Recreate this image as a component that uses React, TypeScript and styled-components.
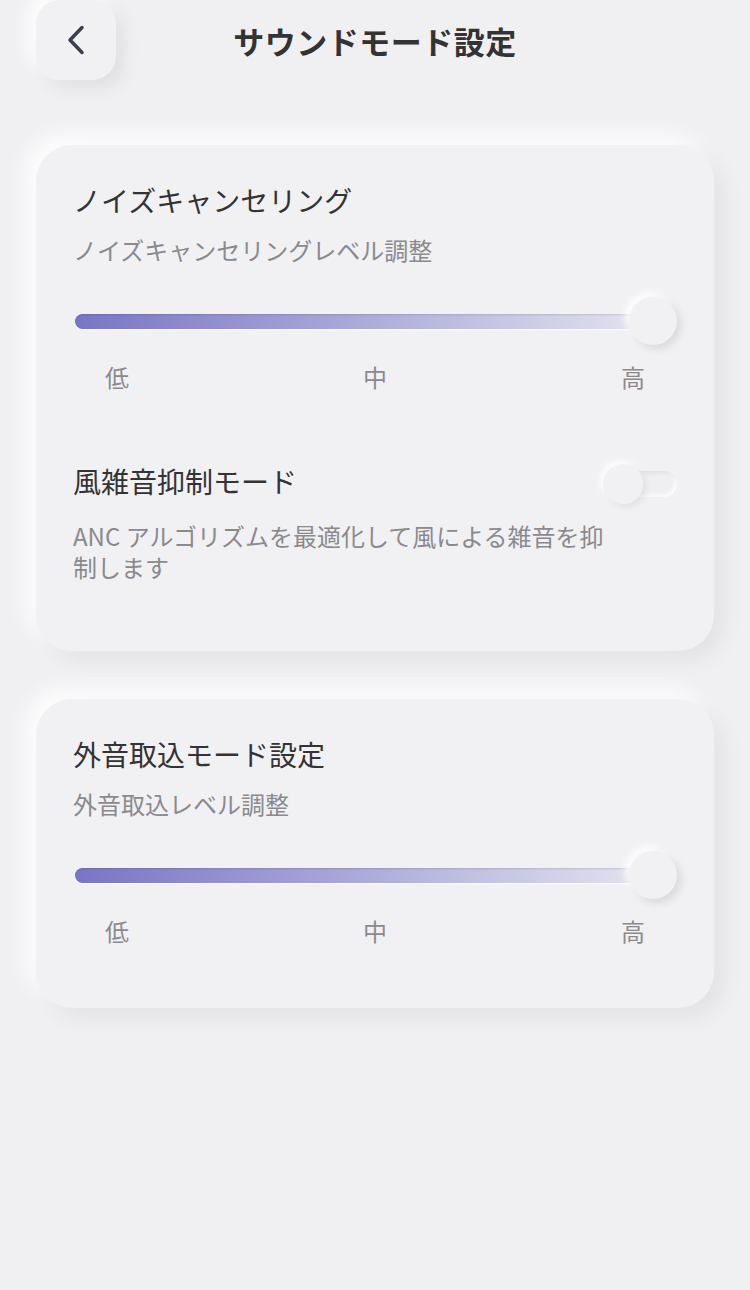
import React from 'react';
import styled, { createGlobalStyle } from 'styled-components';

const GlobalStyle = createGlobalStyle`
  html, body {
    margin: 0;
    padding: 0;
    background: #f0f0f3;
  }
  body {
    font-family: "Noto Sans CJK JP", "Noto Sans", sans-serif;
    color: #333;
  }
  * {
    box-sizing: border-box;
  }
`;

const Page = styled.div`
  min-height: 1290px;
  padding: 0 36px 40px;
  background: #f0f0f3;
`;

const Header = styled.header`
  display: grid;
  grid-template-columns: 80px 1fr 80px;
  align-items: center;
  height: 80px;
`;

const BackButton = styled.button`
  width: 80px;
  height: 80px;
  border: none;
  border-radius: 24px;
  background: #f1f1f4;
  display: flex;
  align-items: center;
  justify-content: center;
  padding: 0;
  cursor: pointer;
  box-shadow: 8px 8px 18px rgba(0, 0, 0, 0.07), -8px -8px 18px rgba(255, 255, 255, 0.95);
`;

const PageTitle = styled.h1`
  margin: 0;
  text-align: center;
  font-size: 31px;
  font-weight: 700;
  color: #333;
  letter-spacing: 0.5px;
`;

const Card = styled.section<{ top?: number }>`
  margin-top: ${({ top }) => (top ? top : 0)}px;
  background: #f1f1f4;
  border-radius: 36px;
  padding: 36px 37px 60px;
  box-shadow: 10px 10px 22px rgba(0, 0, 0, 0.06), -10px -10px 22px rgba(255, 255, 255, 0.9);
`;

const CardTitle = styled.h2`
  margin: 0;
  font-size: 28px;
  line-height: 38px;
  font-weight: 400;
  color: #333;
`;

const CardSub = styled.p`
  margin: 14px 0 0;
  font-size: 24px;
  line-height: 34px;
  color: #8a8a8e;
`;

const SliderBox = styled.div`
  position: relative;
  height: 48px;
  margin-top: 30px;
  display: flex;
  align-items: center;
`;

const Track = styled.div`
  width: 100%;
  height: 15px;
  margin-left: 2px;
  border-radius: 8px;
  background: linear-gradient(90deg, #7975c5 0%, #a9a7d8 45%, #e9e9f1 100%);
  box-shadow: inset 0 1px 2px rgba(0, 0, 0, 0.12), 0 1px 1px rgba(255, 255, 255, 0.8);
`;

const Thumb = styled.div`
  position: absolute;
  right: 0;
  top: 0;
  width: 48px;
  height: 48px;
  border-radius: 50%;
  background: #f1f1f4;
  box-shadow: 4px 4px 9px rgba(0, 0, 0, 0.1), -4px -4px 9px rgba(255, 255, 255, 0.95);
`;

const Labels = styled.div`
  display: flex;
  justify-content: space-between;
  padding: 0 32px;
  margin-top: 15px;
  font-size: 24px;
  line-height: 34px;
  color: #8a8a8e;
`;

const ToggleRow = styled.div`
  display: flex;
  align-items: center;
  justify-content: space-between;
  margin-top: 64px;
`;

const Toggle = styled.div`
  position: relative;
  width: 74px;
  height: 40px;
  margin-top: 6px;
`;

const ToggleTrack = styled.div`
  position: absolute;
  right: 0;
  top: 7px;
  width: 56px;
  height: 26px;
  border-radius: 13px;
  background: #efeff2;
  box-shadow: inset 2px 2px 4px rgba(0, 0, 0, 0.07), inset -2px -2px 4px rgba(255, 255, 255, 0.9);
`;

const ToggleKnob = styled.div`
  position: absolute;
  left: 0;
  top: 0;
  width: 40px;
  height: 40px;
  border-radius: 50%;
  background: #f1f1f4;
  box-shadow: 3px 3px 7px rgba(0, 0, 0, 0.07), -3px -3px 7px rgba(255, 255, 255, 0.95);
`;

const Desc = styled.p`
  margin: 16px 0 9px;
  max-width: 540px;
  font-size: 24px;
  line-height: 31px;
  color: #8a8a8e;
`;

function Slider() {
  return (
    <>
      <SliderBox>
        <Track />
        <Thumb />
      </SliderBox>
      <Labels>
        <span>低</span>
        <span>中</span>
        <span>高</span>
      </Labels>
    </>
  );
}

export default function App() {
  return (
    <Page>
      <GlobalStyle />
      <Header>
        <BackButton aria-label="戻る">
          <svg width="18" height="30" viewBox="0 0 18 30">
            <polyline
              points="15,2.5 3,15 15,27.5"
              fill="none"
              stroke="#3a404c"
              strokeWidth="3.5"
              strokeLinecap="round"
              strokeLinejoin="round"
            />
          </svg>
        </BackButton>
        <PageTitle>サウンドモード設定</PageTitle>
        <div />
      </Header>

      <Card top={65}>
        <CardTitle>ノイズキャンセリング</CardTitle>
        <CardSub>ノイズキャンセリングレベル調整</CardSub>
        <Slider />
        <ToggleRow>
          <CardTitle>風雑音抑制モード</CardTitle>
          <Toggle>
            <ToggleTrack />
            <ToggleKnob />
          </Toggle>
        </ToggleRow>
        <Desc>ANC アルゴリズムを最適化して風による雑音を抑制します</Desc>
      </Card>

      <Card top={48}>
        <CardTitle>外音取込モード設定</CardTitle>
        <CardSub>外音取込レベル調整</CardSub>
        <Slider />
      </Card>
    </Page>
  );
}
